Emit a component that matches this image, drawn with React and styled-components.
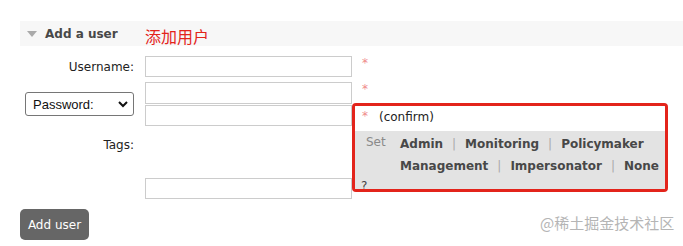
import React from 'react';
import styled, { createGlobalStyle } from 'styled-components';

const GlobalStyle = createGlobalStyle`
  html, body { margin: 0; padding: 0; background: #fff; }
  body { font-family: "DejaVu Sans", Verdana, sans-serif; font-size: 12px; color: #222; }
`;

const Page = styled.div`
  position: relative;
  width: 683px;
  height: 246px;
  overflow: hidden;
  padding: 21px 0 0 20px;
  box-sizing: border-box;
`;

const SectionHead = styled.div`
  display: flex;
  align-items: center;
  height: 25px;
  background: #f7f7f7;
  margin-bottom: 10px;
`;

const Toggle = styled.span`
  display: flex;
  align-items: center;
  width: 25px;
  padding-left: 7px;
  box-sizing: border-box;
`;

const HeadTitle = styled.h2`
  margin: 0;
  width: 100px;
  font-size: 12px;
  font-weight: bold;
  color: #484848;
`;

const Note = styled.span`
  align-self: flex-end;
  font-family: "Noto Sans CJK SC", sans-serif;
  font-size: 16px;
  line-height: 20px;
  color: #e3241b;
`;

const Form = styled.div`
  display: flex;
  align-items: flex-start;
`;

const Fields = styled.div`
  display: grid;
  grid-template-columns: 114px 207px;
  column-gap: 11px;
  align-items: start;
`;

const Label = styled.label`
  text-align: right;
  line-height: ${p => p.$lh || 21}px;
  padding-top: ${p => p.$top || 0}px;
  color: #222;
`;

const Input = styled.input`
  display: block;
  width: 207px;
  height: ${p => p.$h || 21}px;
  box-sizing: border-box;
  border: 1px solid #ccc;
  margin: 0;
  margin-top: ${p => p.$top || 0}px;
  padding: 0 3px;
  background: #fff;
`;

const Stack = styled.div`
  display: flex;
  flex-direction: column;
  gap: 1px;
  margin-top: 5px;
`;

const SelectWrap = styled.div`
  position: relative;
  align-self: center;
  justify-self: end;
  width: 109px;
  height: 24px;
  margin-top: 5px;
`;

const Select = styled.select`
  appearance: none;
  width: 100%;
  height: 100%;
  box-sizing: border-box;
  border: 1px solid #767676;
  border-radius: 3px;
  background: #fff;
  padding: 0 0 0 7px;
  font-family: "Liberation Sans", Arial, sans-serif;
  font-size: 13px;
  color: #111;
`;

const Chevron = styled.svg`
  position: absolute;
  right: 6px;
  top: 9px;
  pointer-events: none;
`;

const Side = styled.div`
  display: flex;
  flex-direction: column;
  width: 316px;
`;

const StarRow = styled.div`
  height: 21px;
  padding-left: 10px;
  margin-top: ${p => p.$top || 0}px;
`;

const Star = styled.span`
  display: inline-block;
  color: #ef8a8a;
  font-size: 12px;
  line-height: 12px;
  margin-top: 1px;
`;

const Callout = styled.div`
  height: 89px;
  box-sizing: border-box;
  border: 3px solid #e3241b;
  border-radius: 4px;
  overflow: hidden;
  display: flex;
  flex-direction: column;
`;

const ConfirmRow = styled.div`
  display: flex;
  align-items: flex-start;
  flex-shrink: 0;
  height: 25px;
  padding: 3px 0 0 7px;
  box-sizing: border-box;
  background: #fff;
`;

const Confirm = styled.span`
  margin-left: 11px;
  line-height: 14px;
  margin-top: 1px;
  color: #222;
`;

const Help = styled.div`
  flex: 1 0 auto;
  background: #e3e3e3;
  padding-top: 2px;
`;

const TagGrid = styled.div`
  display: grid;
  grid-template-columns: 34px auto;
  padding-left: 11px;
`;

const SetWord = styled.span`
  color: #8a8a8a;
  line-height: 18px;
`;

const TagLines = styled.div`
  display: flex;
  flex-direction: column;
`;

const TagLine = styled.div`
  line-height: 22px;
  white-space: nowrap;
`;

const Tag = styled.span`
  font-weight: bold;
  color: #484848;
`;

const Sep = styled.span`
  color: #aaa;
  padding: 0 9px;
`;

const Hint = styled.div`
  padding-left: 6px;
  margin-top: 2px;
  line-height: 14px;
  color: #444;
`;

const Button = styled.button`
  display: block;
  margin-top: 10px;
  width: 69px;
  height: 31px;
  border: none;
  border-radius: 5px;
  background: #666;
  color: #fff;
  font-family: "DejaVu Sans", Verdana, sans-serif;
  font-size: 12px;
  padding: 0;
`;

const Watermark = styled.div`
  position: absolute;
  left: 540px;
  top: 214px;
  font-family: "Noto Sans CJK SC", sans-serif;
  font-size: 15px;
  line-height: 18px;
  color: #b5b5b5;
`;

const rows = [
  ['Admin', 'Monitoring', 'Policymaker'],
  ['Management', 'Impersonator', 'None'],
];

export default function App() {
  return (
    <Page>
      <GlobalStyle />
      <SectionHead>
        <Toggle>
          <svg width="10" height="6" viewBox="0 0 10 6">
            <polygon points="0,0 10,0 5,6" fill="#aaa" />
          </svg>
        </Toggle>
        <HeadTitle>Add a user</HeadTitle>
        <Note>添加用户</Note>
      </SectionHead>

      <Form>
        <Fields>
          <Label $lh={19} $top={2}>Username:</Label>
          <Input type="text" />

          <SelectWrap>
            <Select defaultValue="password">
              <option value="password">Password:</option>
              <option value="hash">Password hash:</option>
            </Select>
            <Chevron width="10" height="7" viewBox="0 0 10 7">
              <polyline points="1,1 5,5 9,1" fill="none" stroke="#111" strokeWidth="2" />
            </Chevron>
          </SelectWrap>
          <Stack>
            <Input type="password" $h={22} />
            <Input type="password" />
          </Stack>

          <Label $lh={16} $top={11}>Tags:</Label>
          <Input type="text" $top={52} />
        </Fields>

        <Side>
          <StarRow><Star>*</Star></StarRow>
          <StarRow $top={5}><Star>*</Star></StarRow>
          <Callout>
            <ConfirmRow>
              <Star>*</Star>
              <Confirm>(confirm)</Confirm>
            </ConfirmRow>
            <Help>
              <TagGrid>
                <SetWord>Set</SetWord>
                <TagLines>
                  {rows.map((line, i) => (
                    <TagLine key={i}>
                      {line.map((t, j) => (
                        <React.Fragment key={t}>
                          {j > 0 && <Sep>|</Sep>}
                          <Tag>{t}</Tag>
                        </React.Fragment>
                      ))}
                    </TagLine>
                  ))}
                </TagLines>
              </TagGrid>
              <Hint>?</Hint>
            </Help>
          </Callout>
        </Side>
      </Form>

      <Button>Add user</Button>
      <Watermark>@稀土掘金技术社区</Watermark>
    </Page>
  );
}
